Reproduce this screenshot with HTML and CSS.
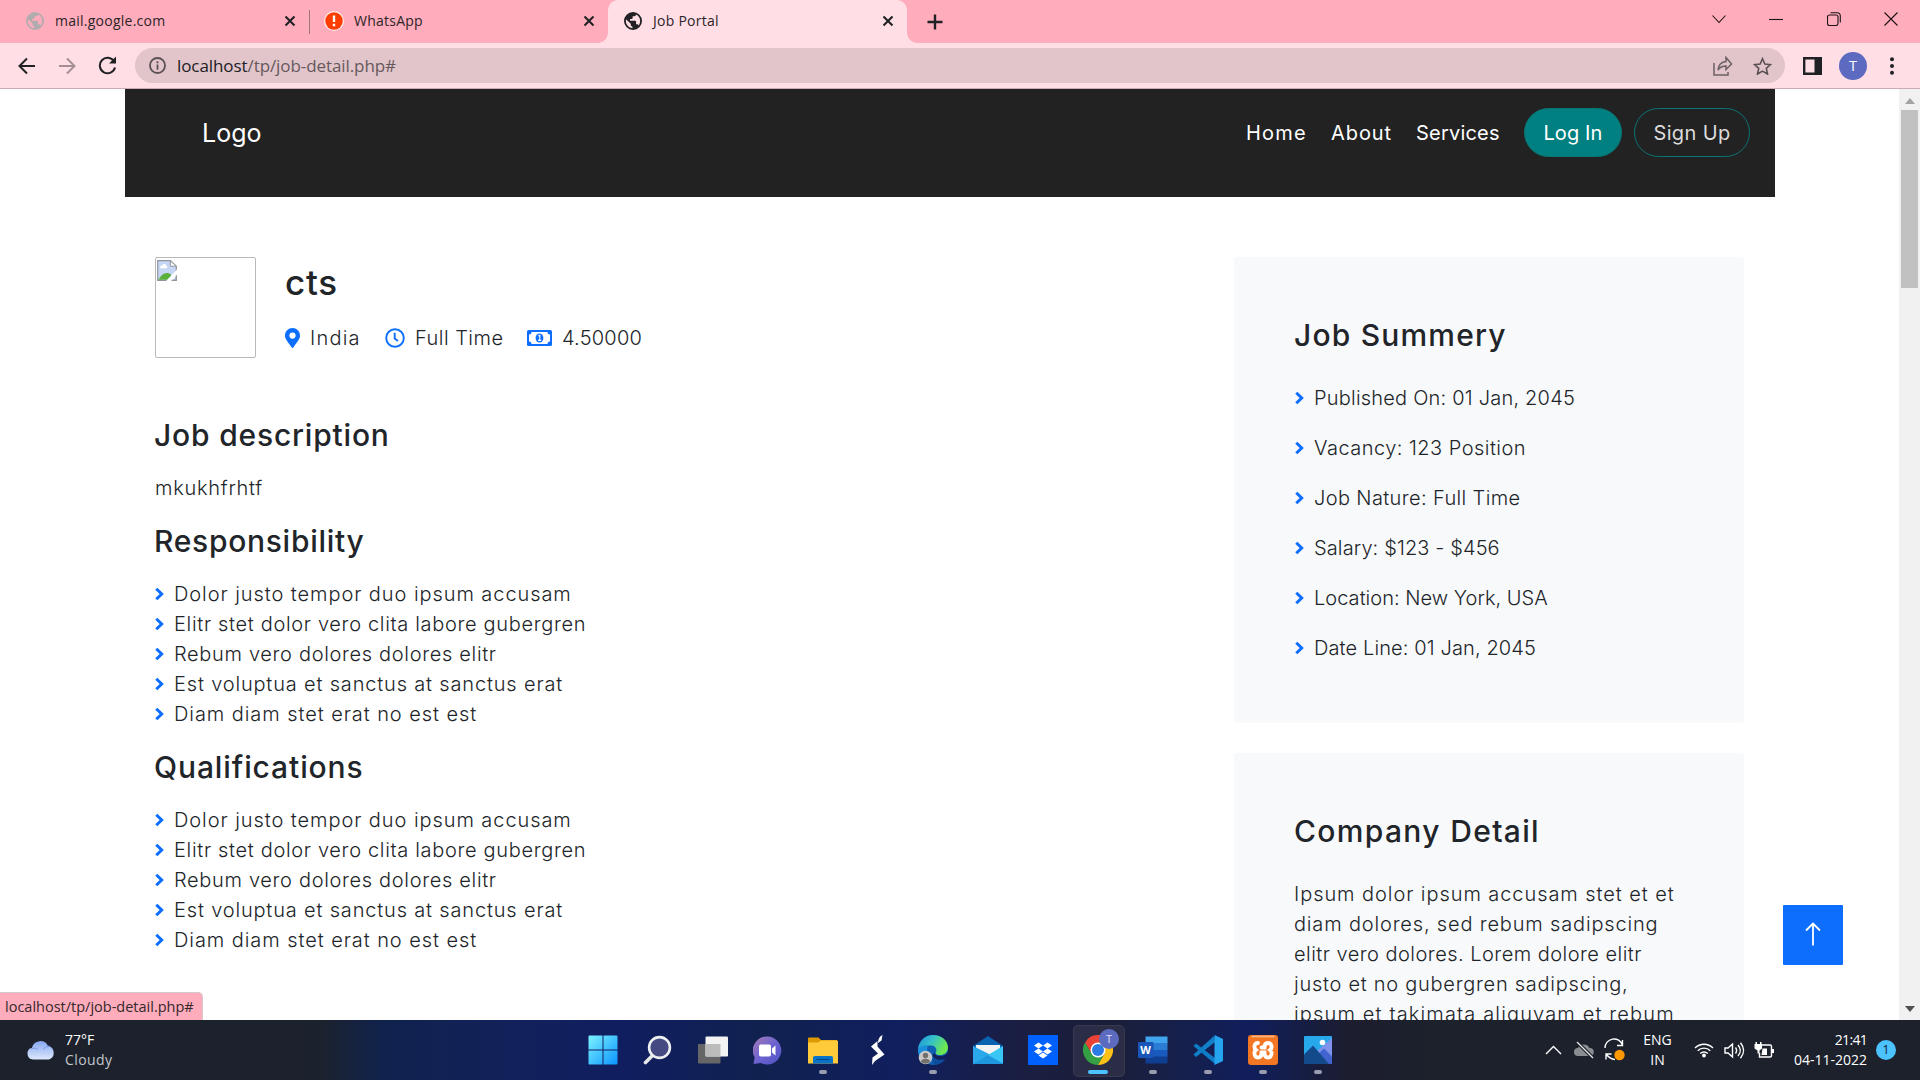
FILE: index.html
```html
<!DOCTYPE html>
<html lang="en">
<head>
<meta charset="utf-8">
<title>Job Portal</title>
<link rel="stylesheet" href="styles.css">
</head>
<body>
<svg class="defs" width="0" height="0">
  <defs>
    <symbol id="globe" viewBox="0 0 24 24"><path fill="currentColor" fill-rule="evenodd" d="M12 0a12 12 0 1 0 0 24 12 12 0 0 0 0-24zM3 10l6 5.500v1.500c0 1.200 1 2.200 2.200 2.200V21.500C6.500 21 2.500 17 2.500 12c0-.700.200-1.400.500-2zm16.500 8c-.300-1-1.200-1.700-2.200-1.700h-1.200v-3.500c0-.700-.500-1.200-1.200-1.200H8V9.300h2.300c.700 0 1.200-.500 1.200-1.200V5.700h2.300c1.200 0 2.200-1 2.200-2.300 3.300 1.400 5.500 4.700 5.500 8.600 0 2.300-.800 4.400-2 6z"/></symbol>
    <symbol id="close" viewBox="0 0 12 12"><path d="M1.500 1.500l9 9M10.500 1.500l-9 9" stroke="#202124" stroke-width="2.100" fill="none"/></symbol>
    <symbol id="angle" viewBox="0 0 9 14"><path d="M1.300 1.700L6.700 7 1.300 12.300" stroke="#0d6efd" stroke-width="3" fill="none"/></symbol>
  </defs>
</svg>
<div class="screen">
  <div class="tabstrip">
    <div class="tab tab-mail"><svg class="fav gray"><use href="#globe"/></svg><span class="tab-title">mail.google.com</span><svg class="x"><use href="#close"/></svg></div>
    <div class="tab tab-wa">
      <svg class="fav-wa" viewBox="0 0 20 20"><circle cx="10" cy="10" r="10" fill="#ffe9ea"/><circle cx="10" cy="10" r="8.700" fill="#ff3d00"/><path d="M8.800 4.500h2.400v6.500H8.800zM8.800 12.700h2.400v2.500H8.800z" fill="#fff"/></svg>
      <span class="tab-title">WhatsApp</span><svg class="x"><use href="#close"/></svg></div>
    <div class="tab tab-active"><svg class="fav"><use href="#globe"/></svg><span class="tab-title">Job Portal</span><svg class="x"><use href="#close"/></svg></div>
    <svg class="plus" viewBox="0 0 16 16"><path d="M8 .500v15M.500 8h15" stroke="#202124" stroke-width="2.400"/></svg>
    <div class="winctl">
      <svg width="14" height="14" viewBox="0 0 14 14"><path d="M.500 3.500L7 10.500l6.500-7"/></svg>
      <svg width="14" height="14" viewBox="0 0 14 14"><path d="M0 7.500h14"/></svg>
      <svg width="14" height="14" viewBox="0 0 14 14"><rect x=".500" y="3" width="10.500" height="10.500" rx="2"/><path d="M3.500.700H10a3.300 3.300 0 0 1 3.300 3.300v6.500"/></svg>
      <svg width="14" height="14" viewBox="0 0 14 14"><path d="M.500.500l13 13M13.500.500l-13 13"/></svg>
    </div>
  </div>
  <div class="toolbar">
    <div class="navbtns">
      <svg width="18" height="18" viewBox="0 0 18 18" class="ln"><path d="M17 9H2M9 1.500L1.500 9 9 16.500"/></svg>
      <svg width="18" height="18" viewBox="0 0 18 18" class="ln dim"><path d="M1 9h15M9 1.500L16.500 9 9 16.500"/></svg>
      <svg width="19" height="19" viewBox="0 0 19 19" class="ln"><path d="M16 5.300A7.700 7.700 0 1 0 17 11.500"/><path d="M18 .500v7h-7z" fill="#202124" stroke="none"/></svg>
    </div>
    <div class="omnibox">
      <svg width="17" height="17" viewBox="0 0 17 17"><circle cx="8.500" cy="8.500" r="7.500" fill="none" stroke="#5b5155" stroke-width="1.800"/><path d="M7.600 4.300h1.800v1.900H7.600zM7.600 7.400h1.800v5.300H7.600z" fill="#5b5155"/></svg>
      <span class="url"><b>localhost</b>/tp/job-detail.php#</span>
      <svg class="share" width="20" height="20" viewBox="0 0 20 20"><path d="M1 7v12h14v-3M5 14c.500-5 3-8 8-8.500V1.500L18.500 8 13 13.500V10c-4 0-6 1-8 4z" fill="none" stroke="#6b6064" stroke-width="1.500"/></svg>
      <svg width="19" height="18" viewBox="0 0 20 19"><path d="M10 1.800l2.500 5.600 6 .600-4.500 4 1.300 6-5.300-3.100L4.700 18 6 12 1.500 8l6-.600z" fill="none" stroke="#5b5155" stroke-width="1.700"/></svg>
    </div>
    <svg class="panel" width="19" height="18"><path d="M1.200 1.200h16.600v15.600H1.200z" fill="none" stroke="#202124" stroke-width="2.400"/><path d="M11.500 0H19v18h-7.500z" fill="#202124"/></svg>
    <div class="avatar">T</div>
    <svg class="dots" width="4" height="18" viewBox="0 0 4 18"><g fill="#202124"><circle cx="2" cy="2.300" r="2"/><circle cx="2" cy="9" r="2"/><circle cx="2" cy="15.700" r="2"/></g></svg>
  </div>

  <div class="viewport">
    <div class="page">
      <header class="header">
        <span class="logo">Logo</span>
        <nav class="nav">
          <span class="w60 t15">Home</span><span class="w60 t12">About</span><span class="w83 t5">Services</span>
          <span class="btn login t4">Log In</span><span class="btn signup t6">Sign Up</span>
        </nav>
      </header>
      <div class="row">
        <main class="main">
          <div class="job">
            <div class="noimg"><svg width="20" height="21" viewBox="0 0 20 21"><path d="M.700.700h12.800l5.800 5.500V20.300H.700z" fill="#c6d7f5" stroke="#8f959c" stroke-width="1.200"/><path d="M13.300.700v5.500h6z" fill="#fff" stroke="#8f959c"/><path d="M3 7.500a2 2 0 0 1 2.300-2 2.300 2.300 0 0 1 4.400.800 1.500 1.500 0 0 1 .300 2H3.500z" fill="#fff"/><path d="M1.300 19.700C4 15 7 12.500 11 13l3 1.500v5.200z" fill="#5bb03b"/><path d="M9 21L20 9.500v5.500L14.500 21z" fill="#fff"/><path d="M14.500 20.300h4.800v-5" fill="none" stroke="#8f959c"/></svg></div>
            <div class="jobinfo">
              <h3>cts</h3>
              <div class="meta">
                <svg width="15" height="20" viewBox="0 0 384 512"><path fill="#0d6efd" d="M172.300 501.700C27 291 0 269.400 0 192 0 86 86 0 192 0s192 86 192 192c0 77.400-27 99-172.300 309.700-9.500 13.800-29.900 13.800-39.400 0zM192 272a80 80 0 1 0 0-160 80 80 0 0 0 0 160z"/></svg><span class="m1 t15">India</span>
                <svg width="20" height="20" viewBox="0 0 20 20"><circle cx="10" cy="10" r="8.800" fill="none" stroke="#0d6efd" stroke-width="1.900"/><path d="M9.700 4.800v5.700l3.300 2.400" fill="none" stroke="#0d6efd" stroke-width="1.900"/></svg><span class="m2 t7">Full Time</span>
                <svg width="25" height="16" viewBox="0 0 25 16"><rect width="25" height="16" rx="1.500" fill="#0d6efd"/><path d="M4.500 2h16a2.500 2.500 0 0 0 2.500 2.500v7a2.500 2.500 0 0 0-2.500 2.500h-16A2.500 2.500 0 0 0 2 11.500v-7A2.500 2.500 0 0 0 4.500 2z" fill="#fff"/><ellipse cx="12.500" cy="8" rx="3.900" ry="4.500" fill="#0d6efd"/><path d="M11.300 6l1.500-.800v5M11 10.400h3.200" stroke="#fff" stroke-width="1.100" fill="none"/></svg><span class="t5">4.50000</span>
              </div>
            </div>
          </div>
          <h4 class="t12">Job description</h4>
          <p class="t10">mkukhfrhtf</p>
          <h4 class="t11">Responsibility</h4>
          <ul>
            <li><svg><use href="#angle"/></svg><span class="t12">Dolor justo tempor duo ipsum accusam</span></li>
            <li><svg><use href="#angle"/></svg><span class="t9">Elitr stet dolor vero clita labore gubergren</span></li>
            <li><svg><use href="#angle"/></svg><span class="t9">Rebum vero dolores dolores elitr</span></li>
            <li><svg><use href="#angle"/></svg><span class="t11">Est voluptua et sanctus at sanctus erat</span></li>
            <li><svg><use href="#angle"/></svg><span class="t12">Diam diam stet erat no est est</span></li>
          </ul>
          <h4 class="t13">Qualifications</h4>
          <ul>
            <li><svg><use href="#angle"/></svg><span class="t12">Dolor justo tempor duo ipsum accusam</span></li>
            <li><svg><use href="#angle"/></svg><span class="t9">Elitr stet dolor vero clita labore gubergren</span></li>
            <li><svg><use href="#angle"/></svg><span class="t9">Rebum vero dolores dolores elitr</span></li>
            <li><svg><use href="#angle"/></svg><span class="t11">Est voluptua et sanctus at sanctus erat</span></li>
            <li><svg><use href="#angle"/></svg><span class="t12">Diam diam stet erat no est est</span></li>
          </ul>
        </main>
        <aside class="side">
          <section class="card">
            <h4 class="t17">Job Summery</h4>
            <ul>
              <li><svg><use href="#angle"/></svg><span class="t5">Published On: 01 Jan, 2045</span></li>
              <li><svg><use href="#angle"/></svg><span class="t7">Vacancy: 123 Position</span></li>
              <li><svg><use href="#angle"/></svg><span class="t6">Job Nature: Full Time</span></li>
              <li><svg><use href="#angle"/></svg><span class="t4">Salary: $123 - $456</span></li>
              <li><svg><use href="#angle"/></svg><span class="t3">Location: New York, USA</span></li>
              <li><svg><use href="#angle"/></svg><span class="t4">Date Line: 01 Jan, 2045</span></li>
            </ul>
          </section>
          <section class="card">
            <h4 class="t19">Company Detail</h4>
            <p><span class="t12">Ipsum dolor ipsum accusam stet et et</span><br><span class="t11">diam dolores, sed rebum sadipscing</span><br><span class="t7">elitr vero dolores. Lorem dolore elitr</span><br><span class="t10">justo et no gubergren sadipscing,</span><br><span class="t14">ipsum et takimata aliquyam et rebum</span></p>
          </section>
        </aside>
      </div>
    </div>
    <div class="scrollbar">
      <svg width="10" height="6"><path d="M5 0l5 6H0z" fill="#a3a3a3"/></svg>
      <div class="thumb"></div>
      <svg class="down" width="10" height="6"><path d="M0 0h10L5 6z" fill="#505050"/></svg>
    </div>
    <div class="totop"><svg width="16" height="24" viewBox="0 0 16 24"><path d="M8 23.500V1.500M1 8.500l7-7 7 7" fill="none" stroke="#fff" stroke-width="1.800"/></svg></div>
    <div class="status">localhost/tp/job-detail.php#</div>
  </div>

  <div class="taskbar">
    <div class="weather">
      <svg width="30" height="20" viewBox="0 0 30 20"><defs><linearGradient id="cl" x2="0" y2="1"><stop stop-color="#86a8f0"/><stop offset="1" stop-color="#dce8fb"/></linearGradient></defs><path d="M7 19.500a6 6 0 0 1-1-11.800A8.500 8.500 0 0 1 22 6a7 7 0 0 1 1 13.500z" fill="url(#cl)"/><path d="M5 9c3-1.500 6-.500 7 .500M17 9.500c2-3 5-3.500 7-3.200" fill="none" stroke="#7c9be8" stroke-width="1"/></svg>
      <div class="wtext"><span>77°F</span><span class="cloudy">Cloudy</span></div>
    </div>
    <div class="apps">
      <div class="app"><svg width="30" height="30" viewBox="0 0 30 30"><defs><linearGradient id="wn" x2="1" y2="1"><stop stop-color="#7df3ff"/><stop offset="1" stop-color="#0a94ff"/></linearGradient></defs><path d="M.500 1.500a1 1 0 0 1 1-1h13v14H.500zM15.500.500h13a1 1 0 0 1 1 1v13h-14zM.500 15.500h14v14h-13a1 1 0 0 1-1-1zM15.500 15.500h14v13a1 1 0 0 1-1 1h-13z" fill="url(#wn)"/></svg></div>
      <div class="app"><svg width="30" height="30" viewBox="0 0 30 30"><path d="M10 20l-7.500 7.500" stroke="#e6e8ea" stroke-width="3.600" stroke-linecap="round"/><circle cx="16.500" cy="12.500" r="10.400" fill="#454a83" stroke="#eceef0" stroke-width="2.600"/></svg></div>
      <div class="app"><svg width="30" height="30" viewBox="0 0 30 30"><rect x="0" y="9" width="22.500" height="19.500" rx="1" fill="#666"/><rect x="7.500" y="1.500" width="22.500" height="20" rx="1" fill="#f3f3f3"/><path d="M7.500 9h15v12.500h-15z" fill="#bcbcbc"/></svg></div>
      <div class="app"><svg width="30" height="30" viewBox="0 0 30 30"><defs><linearGradient id="ch" x2="1" y2="1"><stop stop-color="#a77bb5"/><stop offset=".500" stop-color="#6d63d0"/><stop offset="1" stop-color="#4c52c4"/></linearGradient></defs><path d="M14 1.500a14 14 0 1 1-6 26.500L.500 29l1.200-6.500A14 14 0 0 1 14 1.500z" fill="url(#ch)"/><rect x="6" y="9.500" width="12" height="12" rx="1.800" fill="#fff"/><path d="M19 13.500l3.500-3v10l-3.500-3z" fill="#fff"/></svg></div>
      <div class="app run"><svg width="30" height="30" viewBox="0 0 30 30"><path d="M0 3.500a1 1 0 0 1 1-1h9.500L13 5h16v10H0z" fill="#dc9a04"/><path d="M0 7.500h10l3-2h16a1 1 0 0 1 1 1V28.500H0z" fill="#ffcb3b"/><path d="M5 28.500V23a2 2 0 0 1 2-2h16a2 2 0 0 1 2 2v5.500z" fill="#0a74c8"/><path d="M8.500 24.500h13" stroke="#054a8a" stroke-width="1.200"/></svg></div>
      <div class="app"><svg width="30" height="30" viewBox="0 0 30 30"><path d="M19.500 0c-3 1.500-4.500 4-4.500 8l3.500-2.500zM14.500 6L8 11.500l7 7-5.500 4L9 30l3-4 9.500-6.500-7-8z" fill="#fff"/></svg></div>
      <div class="app run"><svg width="30" height="30" viewBox="0 0 30 30"><defs><linearGradient id="ed" x2="1" y2=".400"><stop stop-color="#1b8fdc"/><stop offset=".500" stop-color="#35c1c9"/><stop offset="1" stop-color="#6de84e"/></linearGradient></defs><circle cx="15" cy="15" r="15" fill="#0f5fb4"/><path d="M0 14C1 6 7 0 15 0c9 0 15 6 15 12.500 0 5-4 7.500-8 7.500-3.500 0-5-1-4-3 1.500-3-1-6.500-5-6.500C7 10.500 2 12 0 14z" fill="url(#ed)"/><path d="M0 14c2-3 6-4 10-3.200C9 13 8 18 12 24l-8 1.500A15 15 0 0 1 0 14z" fill="#1b8fdc"/><path d="M17 17.500c-1 2.500 3 4 7 3.500 2.500-.500 4.500-1.500 5.500-4l2 9-4-1c-6 1-12-1-13-5z" fill="#11205a"/><path d="M14 20c2 5 9 5.500 13.500 4A15 15 0 0 1 16 30z" fill="#0d4d9c"/><circle cx="7.500" cy="22.500" r="6.800" fill="#c9c9c9"/><circle cx="7.500" cy="20.500" r="2.700" fill="#74706c"/><path d="M2.800 27a4.800 4 0 0 1 9.400 0 7 7 0 0 1-9.400 0z" fill="#74706c"/></svg></div>
      <div class="app"><svg width="30" height="30" viewBox="0 0 30 30"><path d="M0 11L15 1l15 10v10H0z" fill="#0a62b0"/><path d="M3 10h24v8L15 21 3 16z" fill="#f3f3f3"/><path d="M0 11l18 9-18 9.500z" fill="#2aa8ea"/><path d="M30 11v17a1 1 0 0 1-1 1H0z" fill="#38c6f4"/><path d="M15 20l15 8.500-1 .500H0z" fill="#1f96e0"/></svg></div>
      <div class="app"><svg width="30" height="30" viewBox="0 0 30 30"><path d="M0 0h30v30H0z" fill="#0061fe"/><path d="M10.500 7.500l4.500 3-4.500 3-4.500-3zM19.500 7.500l4.500 3-4.500 3-4.500-3zM10.500 13.500l4.500 3-4.500 3-4.500-3zM19.500 13.500l4.500 3-4.500 3-4.500-3zM15 17.500l4.500 3-4.500 3-4.500-3z" fill="#fff"/></svg></div>
      <div class="app active"><svg width="30" height="30" viewBox="0 0 30 30"><path d="M2 7.500A15 15 0 0 1 28 7.500H15L8.500 18.700z" fill="#ea4335"/><path d="M2 7.500A15 15 0 0 0 15 30l6.500-11.200H8.500z" fill="#34a044"/><path d="M28 7.500A15 15 0 0 1 15 30l6.500-11.200L15 7.500z" fill="#fbc116"/><circle cx="15" cy="15" r="7.500" fill="#fff"/><circle cx="15" cy="15" r="6" fill="#2c7be5"/></svg><span class="badge">T</span></div>
      <div class="app run"><svg width="30" height="30" viewBox="0 0 30 30"><path d="M7.500 1.500h22v7h-22z" fill="#41a5ee"/><path d="M7.500 8h22v7h-22z" fill="#2b7cd3"/><path d="M7.500 15h22v7h-22z" fill="#185abd"/><path d="M7.500 21.500h22v7h-22z" fill="#103f91"/><rect y="7" width="15.500" height="16" rx="1" fill="#1a56b8"/></svg><span class="w">W</span></div>
      <div class="app run"><svg width="30" height="30" viewBox="0 0 30 30"><path d="M22 7L3 22 .500 19.500 21 1z" fill="#1180c8"/><path d="M.500 11L3 8.500 22 23v6z" fill="#0f7cc6"/><path d="M21.500 0L30 4v22l-8.500 4z" fill="#25a4f0"/></svg></div>
      <div class="app run"><svg width="30" height="30" viewBox="0 0 30 30"><rect width="30" height="30" rx="3" fill="#f37623"/><path d="M3.500 1.500h23" stroke="#fbb27b" stroke-width="1.800"/><path d="M10 8c-4 0-4.500 5-2 7-2.500 2-2 7.500 2 7.500 3 0 3.500-2.500 3.500-5h3c0 2.500.500 5 3.500 5 4 0 4.500-5.500 2-7.500 2.500-2 2-7-2-7-3 0-3.500 2-3.500 4.500h-3" fill="none" stroke="#fff" stroke-width="3.800" stroke-linecap="round"/></svg></div>
      <div class="app run"><svg width="30" height="30" viewBox="0 0 30 30"><rect x="1" y="1" width="28" height="28" rx="1" fill="#27a8ea"/><path d="M14 16L29 3v25z" fill="#7f93ea"/><path d="M15 19l6-5.500 8 8V29H15z" fill="#4264cf"/><path d="M1 19.500l9-9L26 29H1z" fill="#134a8c"/><circle cx="19.500" cy="7.500" r="2.800" fill="#fff"/></svg></div>
    </div>
    <div class="tray">
      <svg class="up" width="17" height="10"><path d="M1 9l7.500-7.500L16 9" class="wl"/></svg>
      <svg class="cl" width="20" height="18" viewBox="0 0 20 18"><path d="M4 15a4 4 0 0 1 0-8 6.500 6.500 0 0 1 11.500 0 4 4 0 0 1 .500 8z" fill="#8a8d92"/><path d="M3 1l16 16" stroke="#1c222d" stroke-width="3.500"/><path d="M3 1l16 16" stroke="#e8e8e8" stroke-width="1.300"/></svg>
      <svg class="sy" width="21" height="22" viewBox="0 0 21 22"><path d="M1 9a9 9 0 0 1 17.500-3M18.500 1v5.500H13M2 20.500V15h5.500M2.500 15.500C5 19 7 20 11 20.500" class="wl"/><circle cx="15.500" cy="16" r="5.200" fill="#ff9800"/></svg>
      <div class="lang"><span>ENG</span><span>IN</span></div>
      <svg class="wf" width="20" height="16" viewBox="0 0 20 16"><path d="M1 6a12.700 12.700 0 0 1 18 0M3.700 8.700a8.900 8.900 0 0 1 12.600 0M6.300 11.500a5.200 5.200 0 0 1 7.400 0" class="wl"/><circle cx="10" cy="13.500" r="1.900" fill="#fff"/></svg>
      <svg class="sp" width="20" height="17" viewBox="0 0 20 17"><path d="M1 6h3l4.500-4v13L4 11H1zM11.500 5.500c1.500 2 1.500 4 0 6M14 3c3 3.500 3 7.500 0 11M16.500.800c4 5 4 10.500 0 15.400" class="wl"/></svg>
      <svg class="bt" width="20" height="17" viewBox="0 0 20 17"><path d="M8 3h8a1.500 1.500 0 0 1 1.500 1.500v9A1.500 1.500 0 0 1 16 15H5.500v-4" class="wl"/><path d="M18 7h2v4h-2zM8.500 6.500H13v6.500H7.500zM1.500 0H3v2h3V0h1.500v2h.500v4.500L5.500 8.500v3h-2v-3L.500 6.500V2h1z" fill="#fff"/></svg>
      <div class="clock"><span class="time">21:41</span><span>04-11-2022</span></div>
      <div class="count">1</div>
    </div>
  </div>
</div>
</body>
</html>
```
FILE: styles.css
```css
* { box-sizing: border-box; }
body { margin: 0; background: #fff; font-family: Inter, sans-serif; }
h3, h4, p, ul { margin: 0; padding: 0; }
ul { list-style: none; }
svg { flex: none; display: block; }
.defs { position: absolute; }
.screen { width: 1920px; height: 1080px; overflow: hidden; display: flex; flex-direction: column; }

/* letter spacing utilities, in tenths of a pixel, less a share of the font size */
.t3 { letter-spacing: calc(.28px - .0125em); }
.t4 { letter-spacing: calc(.37px - .0125em); }
.t5 { letter-spacing: calc(.46px - .0125em); }
.t6 { letter-spacing: calc(.62px - .0125em); }
.t7 { letter-spacing: calc(.72px - .0125em); }
.t9 { letter-spacing: calc(.92px - .0125em); }
.t10 { letter-spacing: calc(.98px - .0125em); }
.t11 { letter-spacing: calc(1.080px - .0125em); }
.t12 { letter-spacing: calc(1.180px - .0125em); }
.t13 { letter-spacing: calc(1.320px - .0140em); }
.t14 { letter-spacing: calc(1.400px - .0125em); }
.t15 { letter-spacing: calc(1.500px - .0140em); }
.t17 { letter-spacing: calc(1.730px - .0180em); }
.t19 { letter-spacing: calc(1.880px - .0180em); }

/* browser chrome */
.tabstrip { height: 43px; background: #ffadbc; display: flex; align-items: center; font: 14px/20px "Open Sans", sans-serif; color: #2b2427; letter-spacing: .25px; }
.tab { display: flex; align-items: center; height: 43px; padding-bottom: 1px; }
.tab-title { flex: 1; }
.tab-mail { width: 310px; padding: 0 14px 1px 26px; gap: 11px; position: relative; }
.tab-mail::after { content: ""; position: absolute; right: 0; top: 10px; width: 1px; height: 24px; background: #a0757e; }
.tab-wa { width: 298px; padding: 0 13px 1px 14px; gap: 10px; }
.tab-active { width: 299px; padding: 0 13px 1px 16px; gap: 11px; background: #ffdfe5; border-radius: 10px 10px 0 0; position: relative; }
.tab-active::before, .tab-active::after { content: ""; position: absolute; bottom: 0; width: 10px; height: 10px; }
.tab-active::before { left: -10px; background: radial-gradient(circle at 0 0, transparent 9.500px, #ffdfe5 10px); }
.tab-active::after { right: -10px; background: radial-gradient(circle at 100% 0, transparent 9.500px, #ffdfe5 10px); }
.fav { width: 18px; height: 18px; color: #202124; }
.fav.gray { color: #b3acae; }
.fav-wa { width: 20px; height: 20px; }
.x { width: 12px; height: 12px; }
.plus { width: 16px; height: 16px; margin-left: 20px; }
.winctl { margin-left: auto; padding: 0 22px 5px 0; display: flex; gap: 43.500px; fill: none; stroke: #1a1214; stroke-width: 1.100; }
.toolbar { height: 46px; background: #ffdfe5; border-bottom: 1px solid #c9adb3; display: flex; align-items: center; padding-left: 18px; }
.navbtns { width: 117px; display: flex; gap: 22px; align-items: center; }
.ln { fill: none; stroke: #202124; stroke-width: 2; }
.dim { stroke: #a58f95; }
.omnibox { width: 1650px; height: 35px; border-radius: 18px; background: #e1c5ca; display: flex; align-items: center; padding: 0 13px 0 14px; }
.url { margin-left: 11px; flex: 1; font: 17px/24px "Open Sans", sans-serif; color: #66595d; letter-spacing: -.08px; }
.url b { font-weight: 400; color: #202124; }
.share { margin-right: 20px; }
.panel { margin-left: 18px; }
.avatar { width: 28px; height: 28px; margin-left: 17px; border-radius: 50%; background: #5c6bc0; color: #fff; font: 14.500px/28px "Open Sans", sans-serif; text-align: center; }
.dots { margin-left: 23px; }

/* page */
.viewport { height: 931px; position: relative; overflow: hidden; display: flex; margin-bottom: 0; flex: 1; }
.page { width: 1899px; padding: 0 124px 0 125px; color: #212529; font-size: 20px; font-weight: 300; line-height: 30px; }
.header { height: 108px; background: #222; color: #fff; display: flex; padding: 19px 25px 0 77px; justify-content: space-between; font-weight: 400; }
.logo { font-size: 25px; line-height: 50px; }
.nav { display: flex; height: 49px; line-height: 50px; white-space: nowrap; }
.w60 { width: 60px; margin-right: 25px; }
.w83 { width: 83px; margin-right: 25px; }
.btn { border: 1px solid #0b7474; border-radius: 25px; line-height: 48px; text-align: center; }
.login { width: 98px; background: #008080; margin-right: 12px; }
.signup { width: 116px; color: #dcdcdc; }
.row { display: flex; justify-content: space-between; padding: 60px 31px 0 30px; }
.job { display: flex; height: 100px; margin-bottom: 60px; align-items: center; }
.noimg { width: 101px; height: 101px; border: 1px solid #b9b9b9; border-radius: 2px; padding: 2px 0 0 1px; }
.jobinfo { margin-left: 29px; }
h3 { font-size: 35px; font-weight: 500; line-height: 42px; letter-spacing: .700px; margin-bottom: 20px; }
h4 { font-size: 30px; font-weight: 500; line-height: 36px; margin-bottom: 20px; margin-left: -1px; }
.meta { display: flex; align-items: center; white-space: nowrap; }
.meta span { margin-left: 10px; }
.meta .m1 { width: 75px; }
.meta .m2 { width: 112px; }
.main p, .main ul { margin-bottom: 20px; }
li { height: 30px; display: flex; align-items: center; white-space: nowrap; }
li svg { width: 9px; height: 14px; margin-right: 10px; }
.side { width: 510px; display: flex; flex-direction: column; gap: 30px; }
.card { background: #f8f9fb; border-radius: 4px; padding: 60px 60px 0 61px; height: 466px; white-space: nowrap; }
.card h4 { margin-bottom: 30px; }
.card p { margin-left: -1px; }
.card ul { display: flex; flex-direction: column; gap: 20px; }
.scrollbar { width: 21px; background: #f1f1f1; display: flex; flex-direction: column; align-items: center; padding: 9px 0 8px; }
.thumb { width: 17px; height: 178px; margin-top: 6px; background: #c1c1c1; }
.down { margin-top: auto; }
.totop { position: absolute; left: 1783px; top: 816px; width: 60px; height: 60px; border-radius: 1px; background: #0d6efd; display: flex; align-items: center; justify-content: center; padding-bottom: 3px; }
.status { position: absolute; left: 0; bottom: 0; width: 203px; height: 28px; padding-left: 5px; background: #ffadbc; border: solid #d5c8ca; border-width: 1px 1px 0 0; border-radius: 0 5px 0 0; font: 14.500px/27px "Open Sans", sans-serif; color: #33282b; }

/* taskbar */
.taskbar { height: 60px; display: flex; position: relative; justify-content: space-between; color: #fff; font: 14px/20px "Open Sans", sans-serif; background: linear-gradient(90deg, #1c212c 0, #1c222d 320px, #10224e 385px, #12215a 510px, #101e60 620px, #11214f 760px, #101f5e 900px, #1a1e42 1020px, #1a1e38 1110px, #16204c 1180px, #101e5c 1250px, #1c1d2e 1350px, #1c212c 1430px); }
.weather { display: flex; padding: 10px 0 0 26px; gap: 9px; width: 575px; }
.weather svg { margin-top: 10px; }
.wtext { display: flex; flex-direction: column; }
.cloudy { color: #c3c6cb; letter-spacing: .4px; }
.apps { display: flex; width: 770px; }
.app { width: 55px; height: 60px; position: relative; display: flex; align-items: center; justify-content: center; }
.app svg { position: relative; }
.run::after { content: ""; position: absolute; left: 24px; bottom: 6px; width: 8px; height: 4px; border-radius: 2px; background: #9a9db0; }
.active::before { content: ""; position: absolute; left: 3px; top: 5px; width: 50px; height: 50px; border-radius: 5px; background: #2a2d45; border: 1px solid #383a50; }
.active::after { content: ""; position: absolute; left: 18px; bottom: 6px; width: 20px; height: 4px; border-radius: 2px; background: #4cc2ff; }
.badge { position: absolute; left: 29px; top: 9px; width: 20px; height: 20px; border-radius: 50%; background: #5c6bc0; color: #dfe2f5; font-size: 11px; line-height: 20px; text-align: center; }
.w { position: absolute; left: 13px; top: 22px; width: 15px; text-align: center; font-size: 11px; line-height: 16px; font-weight: 700; }
.tray { width: 575px; padding-left: 200px; display: flex; align-items: center; }
.tray > svg { overflow: visible; }
.wl { fill: none; stroke: #fff; stroke-width: 1.400; }
.cl { margin-left: 12px; }
.sy { margin-left: 10px; }
.lang { width: 29px; margin-left: 18px; display: flex; flex-direction: column; align-items: center; }
.wf { margin-left: 22px; }
.sp { margin-left: 10px; }
.bt { margin-left: 10px; }
.clock { width: 93px; display: flex; flex-direction: column; align-items: flex-end; }
.time { letter-spacing: -.7px; }
.count { width: 20px; height: 20px; margin-left: 9px; border-radius: 50%; background: #4cc2ff; color: #10222e; font-size: 12px; text-align: center; }
```
